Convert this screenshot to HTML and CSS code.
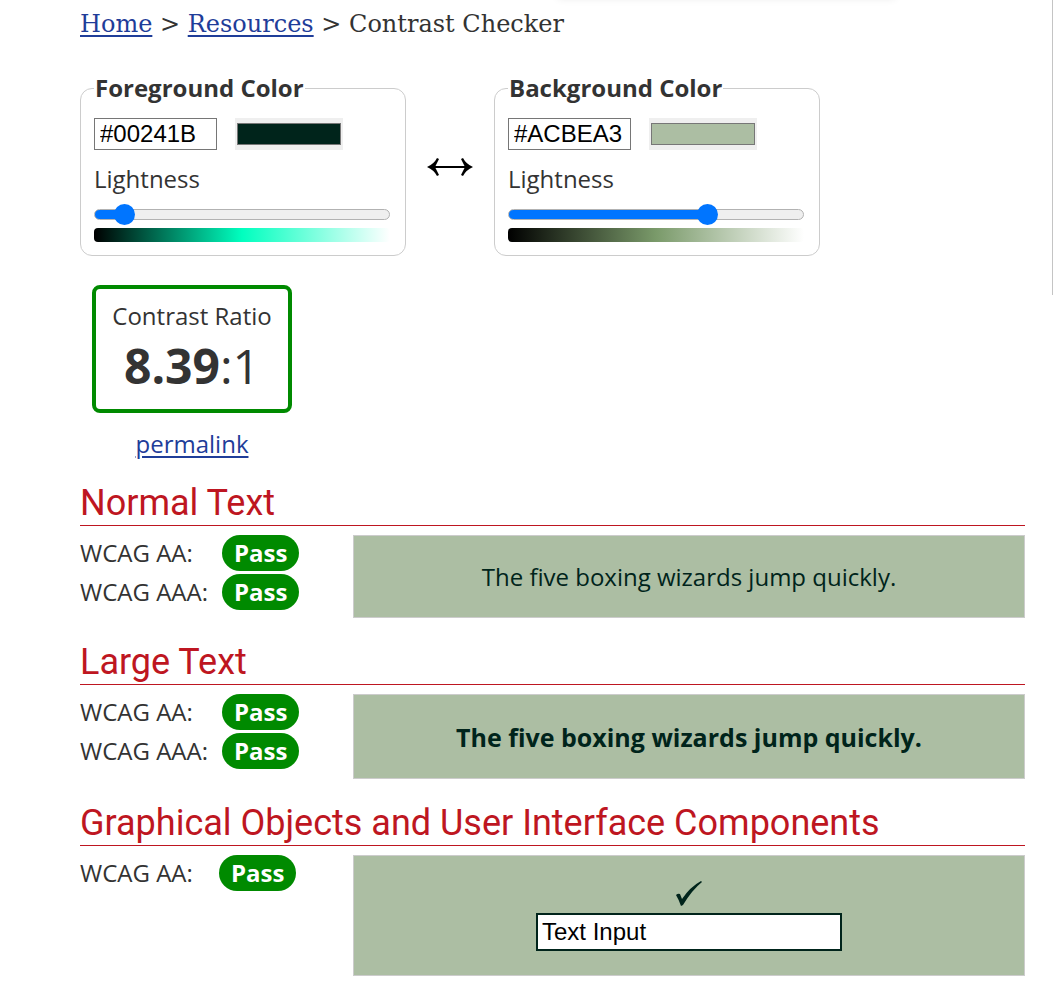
FILE: index.html
```html
<!DOCTYPE html>
<html lang="en">
<head>
<meta charset="utf-8">
<title>Contrast Checker</title>
<link rel="stylesheet" href="styles.css">
</head>
<body>
<div class="top-shadow"></div>
<div class="side-edge"></div>
<main class="page">
  <nav class="breadcrumb"><a href="#">Home</a> &gt; <a href="#">Resources</a> &gt; Contrast Checker</nav>

  <form class="pickers">
    <fieldset class="picker">
      <legend>Foreground Color</legend>
      <div class="picker-row">
        <input class="hex" type="text" value="#00241B" aria-label="Foreground hex value">
        <input class="swatch" type="color" value="#00241b" aria-label="Foreground color picker">
      </div>
      <label class="light-label" for="fg-light">Lightness</label>
      <input class="slider" id="fg-light" type="range" min="0" max="100" value="7" style="--fill: 10%">
      <div class="ramp ramp-fg"></div>
    </fieldset>

    <button class="swap" type="button" aria-label="Swap colors">
      <svg viewBox="0 0 46 20" width="46" height="20" aria-hidden="true">
        <path d="M5 10H41" fill="none" stroke="#000" stroke-width="2"/>
        <path d="M0 10Q7 7 10 1L12 2Q10 6 8 10Q10 14 12 18L10 19Q7 13 0 10ZM46 10Q39 7 36 1L34 2Q36 6 38 10Q36 14 34 18L36 19Q39 13 46 10Z" fill="#000"/>
      </svg>
    </button>

    <fieldset class="picker">
      <legend>Background Color</legend>
      <div class="picker-row">
        <input class="hex" type="text" value="#ACBEA3" aria-label="Background hex value">
        <input class="swatch" type="color" value="#acbea3" aria-label="Background color picker">
      </div>
      <label class="light-label" for="bg-light">Lightness</label>
      <input class="slider" id="bg-light" type="range" min="0" max="100" value="69" style="--fill: 68%">
      <div class="ramp ramp-bg"></div>
    </fieldset>
  </form>

  <div class="result">
    <div class="ratio-box">
      <div>Contrast Ratio</div>
      <div class="ratio"><b>8.39</b>:1</div>
    </div>
    <a href="#">permalink</a>
  </div>

  <section class="level">
    <h2>Normal Text</h2>
    <div class="level-body">
      <div class="checks">
        <div class="check"><span>WCAG AA:</span><b class="badge">Pass</b></div>
        <div class="check"><span>WCAG AAA:</span><b class="badge">Pass</b></div>
      </div>
      <div class="sample">The five boxing wizards jump quickly.</div>
    </div>
  </section>

  <section class="level">
    <h2>Large Text</h2>
    <div class="level-body">
      <div class="checks">
        <div class="check"><span>WCAG AA:</span><b class="badge">Pass</b></div>
        <div class="check"><span>WCAG AAA:</span><b class="badge">Pass</b></div>
      </div>
      <div class="sample sample-large">The five boxing wizards jump quickly.</div>
    </div>
  </section>

  <section class="level">
    <h2>Graphical Objects and User Interface Components</h2>
    <div class="level-body">
      <div class="checks checks-ui">
        <div class="check"><span>WCAG AA:</span><b class="badge">Pass</b></div>
      </div>
      <div class="sample sample-ui">
        <svg viewBox="0 0 26 26" width="26" height="26" aria-hidden="true">
          <path d="M0 14Q2 12 4 13L6 18Q14 6 25 0L26 1Q16 9 7 24L5 25Q3 19 0 14Z" fill="#00241b"/>
        </svg>
        <input class="demo-input" type="text" value="Text Input" aria-label="Text input sample">
      </div>
    </div>
  </section>
</main>
</body>
</html>
```
FILE: styles.css
```css
* { box-sizing: border-box; }

body {
  position: relative;
  margin: 0;
  background: #fff;
  color: #333;
  font: 24px/34px "Open Sans", "Noto Sans", sans-serif;
}

a { color: #1f3d99; text-decoration-thickness: 2px; text-underline-offset: 3px; }

.page { padding: 7px 28px 20px 80px; }

.top-shadow {
  position: absolute;
  top: -12px;
  left: 53%;
  width: 32%;
  height: 10px;
  box-shadow: 0 0 8px rgba(0, 0, 0, 0.1);
}

.side-edge {
  position: absolute;
  top: 0;
  right: 0;
  width: 1px;
  height: 295px;
  background: #c4c4c4;
}

.breadcrumb { font-family: "DejaVu Serif", serif; }

.pickers { display: flex; margin-top: 30px; }

.picker {
  flex: 0 1 326px;
  min-width: 0;
  margin: 0;
  padding: 13px 15px 13px 13px;
  border: 1px solid #ccc;
  border-radius: 12px;
}

.picker legend { padding: 0 1px; font-weight: 700; }

.picker-row { display: flex; gap: 18px; }

.hex {
  width: 123px;
  height: 32px;
  padding: 0 5px;
  border: 1px solid #767676;
  border-radius: 0;
  font: 24px "Liberation Sans", Arial, sans-serif;
  color: #000;
}

.swatch {
  appearance: none;
  width: 108px;
  height: 32px;
  padding: 5px 2px;
  border: 0;
  background: #efefef;
}

.swatch::-webkit-color-swatch-wrapper { padding: 0; }
.swatch::-webkit-color-swatch { border: 1px solid #777; border-radius: 0; }

.light-label { display: block; margin-top: 12px; }

.slider {
  appearance: none;
  display: block;
  width: 100%;
  height: 21px;
  margin: 8px 0 3px;
  background: none;
}

.slider::-webkit-slider-runnable-track {
  height: 11px;
  border: 1px solid #b2b2b2;
  border-radius: 6px;
  background: linear-gradient(to right, #0075ff var(--fill), #efefef var(--fill)) border-box;
}

.slider::-webkit-slider-thumb {
  appearance: none;
  width: 21px;
  height: 21px;
  margin-top: -6px;
  border-radius: 50%;
  background: #0075ff;
}

.ramp { height: 14px; border-radius: 4px; }
.ramp-fg { background: linear-gradient(to right, #000, #00ffbf, #fff); }
.ramp-bg { background: linear-gradient(to right, #000, #7a9a6a, #fff); }

.swap {
  flex: 0 0 88px;
  align-self: center;
  display: flex;
  justify-content: center;
  margin-top: 6px;
  padding: 0;
  border: 0;
  background: none;
}

.result {
  display: flex;
  flex-direction: column;
  align-items: center;
  gap: 14px;
  width: 200px;
  margin: 29px 0 0 12px;
}

.ratio-box {
  width: 100%;
  height: 128px;
  padding: 10px 0;
  border: 4px solid #008a00;
  border-radius: 8px;
  text-align: center;
}

.ratio { font-size: 48px; line-height: 66px; }

.level { margin-top: 22px; }

.result + .level { margin-top: 20px; }

h2 {
  margin: 0;
  border-bottom: 1px solid #be1621;
  color: #be1621;
  font: 400 36px/44px Roboto, sans-serif;
}

.level-body { display: flex; margin-top: 9px; }

.checks {
  flex: 0 0 273px;
  display: flex;
  flex-direction: column;
  gap: 3px;
}

.check { display: grid; grid-template-columns: 142px max-content; line-height: 36px; }
.checks-ui .check { grid-template-columns: 139px max-content; }

.badge {
  padding: 0 12px;
  border-radius: 18px;
  background: #008a00;
  color: #fff;
}

.sample {
  flex: 1;
  display: flex;
  align-items: center;
  justify-content: center;
  min-height: 83px;
  border: 1px solid #ccc;
  background: #acbea3;
  color: #00241b;
}

.sample-large { min-height: 85px; font-size: 25px; font-weight: 700; }

.sample-ui { flex-direction: column; gap: 6px; min-height: 121px; }

.demo-input {
  width: 306px;
  max-width: 90%;
  height: 38px;
  padding: 0 4px;
  border: 2px solid #00241b;
  font: 24px "Liberation Sans", Arial, sans-serif;
  color: #000;
}
```
